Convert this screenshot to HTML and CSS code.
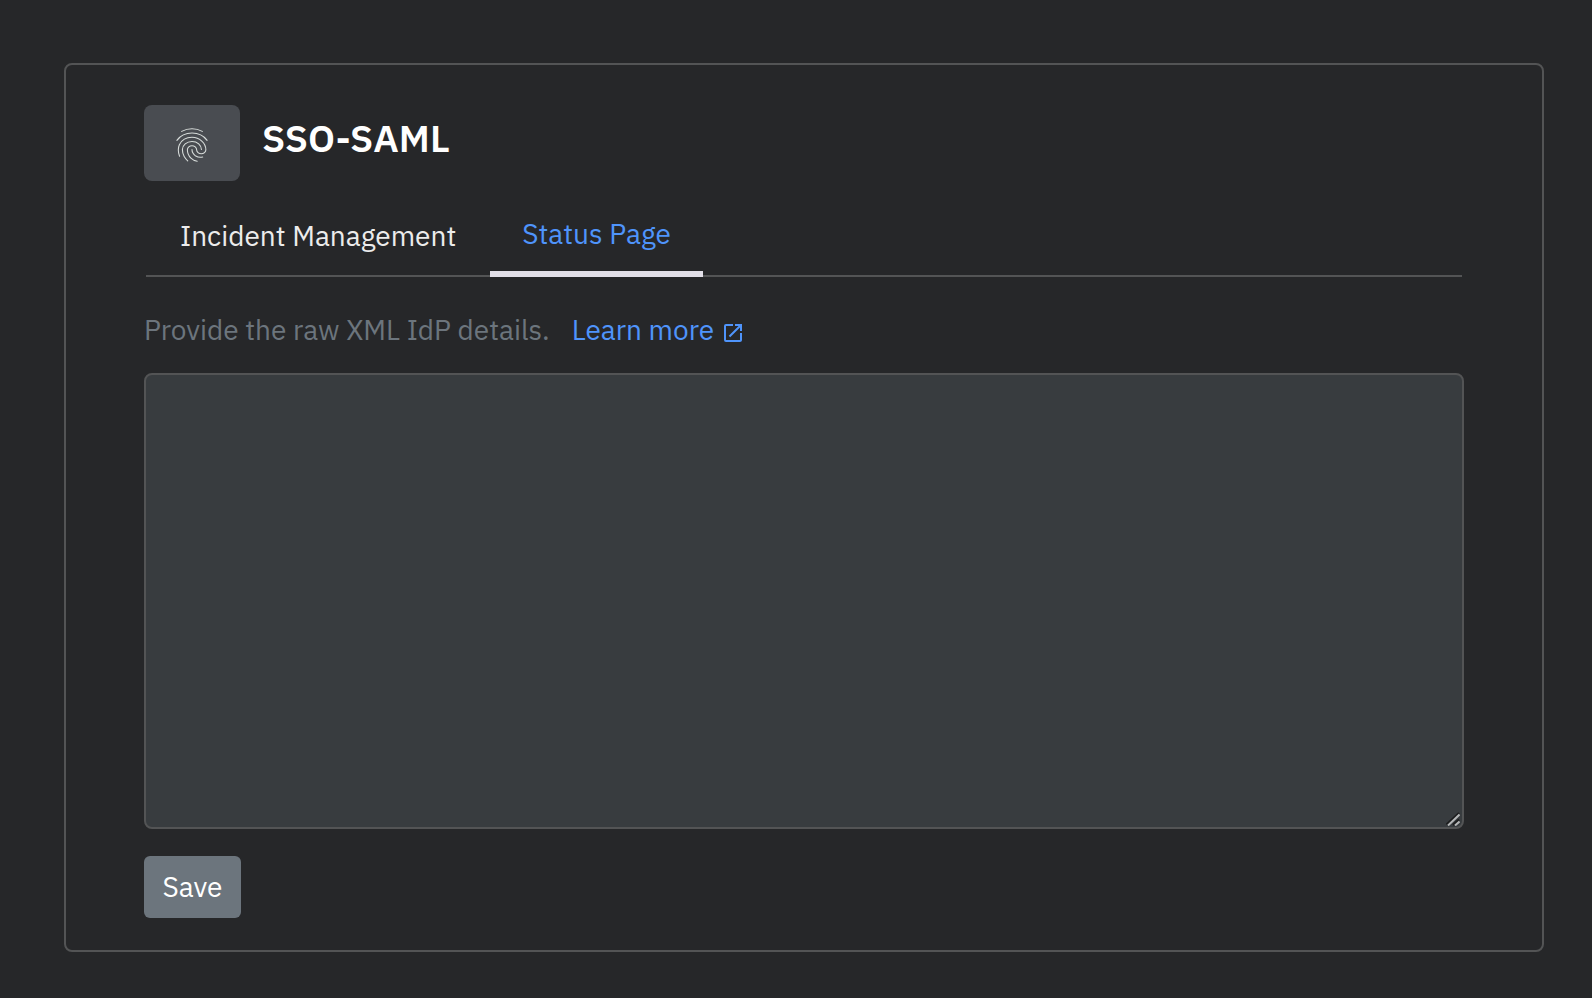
FILE: index.html
```html
<!DOCTYPE html>
<html lang="en">
<head>
<meta charset="utf-8">
<meta name="viewport" content="width=device-width, initial-scale=1">
<title>SSO-SAML</title>
<link rel="stylesheet" href="styles.css">
</head>
<body>
<main class="card">
  <header class="card-header">
    <span class="tile">
      <svg class="fingerprint" viewBox="3 2 18 20" preserveAspectRatio="none" aria-hidden="true">
        <path d="M6.2 4C8 3 9.8 2.5 12 2.5S16 3 17.8 4"/>
        <path d="M3.5 9.3C5.4 6.6 8.4 5 12 5s6.6 1.6 8.5 4.3"/>
        <path d="M5 18.6c-.6-1.6-.7-2.9-.7-3.7 0-1.1.2-2.1.6-3C6.1 9.3 8.9 7.5 12 7.5c4.3 0 7.8 3.3 7.8 7.3 0 1.3-1.2 2.4-2.6 2.4s-2.6-1.1-2.6-2.4-1.2-2.4-2.6-2.4-2.6 1.1-2.6 2.4c0 1.8.7 3.6 2 4.9 1 1 1.9 1.5 3.5 1.9"/>
        <path d="M9.6 21.4c-.9-.9-1.3-1.4-2-2.6-.7-1.2-1-2.5-1-4.1 0-2.6 2.4-4.8 5.4-4.8s5.3 2.1 5.3 4.8"/>
        <path d="M12 14.7c0 1.5.8 2.9 2.1 3.8 1.1.7 2.4.9 3.9.6"/>
      </svg>
    </span>
    <h1 class="title">SSO-SAML</h1>
  </header>
  <nav class="tabs">
    <a class="tab" href="#incident-management">Incident Management</a>
    <a class="tab tab-active" href="#status-page" aria-current="page">Status Page</a>
  </nav>
  <form class="form">
    <div class="hint">
      <label for="idp">Provide the raw XML IdP details.</label>
      <a class="learn" href="#learn-more">Learn more
        <svg class="external" viewBox="3 3 18 18" aria-hidden="true"><path d="M19 19H5V5h7V3H5a2 2 0 0 0-2 2v14a2 2 0 0 0 2 2h14c1.1 0 2-.9 2-2v-7h-2v7zM14 3v2h3.59l-9.83 9.83 1.41 1.41L19 6.41V10h2V3h-7z"/></svg>
      </a>
    </div>
    <div class="field">
      <textarea class="xml" id="idp"></textarea>
      <svg class="grip" viewBox="0 0 14 14" aria-hidden="true">
        <path class="grip-shade" d="M.5 12.5L13 1M7 13l6-5.5"/>
        <path class="grip-line" d="M2 13.5L13.5 2.5M9 13.5l4.5-4"/>
      </svg>
    </div>
    <button class="save" type="button">Save</button>
  </form>
</main>
</body>
</html>
```

FILE: styles.css
```css
* {
  box-sizing: border-box;
}

body {
  margin: 0;
  padding: 63px 48px 46px 64px;
  background: #262729;
  color: #ececec;
  font: 28px/36px "IBM Plex Sans", Roboto, sans-serif;
}

.card {
  padding: 40px 78px 32px;
  border: 2px solid #535455;
  border-radius: 8px;
}

.card-header {
  display: flex;
  gap: 22px;
}

.tile {
  display: flex;
  align-items: center;
  justify-content: center;
  width: 96px;
  height: 76px;
  padding-top: 4px;
  border-radius: 8px;
  background: #494c51;
}

.fingerprint {
  width: 32px;
  height: 34px;
  fill: none;
  stroke: #d8dddb;
  stroke-width: 0.6;
  stroke-linecap: round;
}

.title {
  margin: 0;
  color: #fff;
  font-size: 38px;
  font-weight: 600;
  line-height: 66px;
}

.tabs {
  display: flex;
  align-items: flex-end;
  margin: 24px 2px 0;
  height: 72px;
  box-shadow: inset 0 -2px #535455;
}

.tab {
  padding: 0 34px 23px;
  color: #ececec;
  text-decoration: none;
}

.tab-active {
  padding: 0 32px 19px;
  border-bottom: 6px solid #e2dfe8;
  color: #4f94fb;
}

.hint {
  display: flex;
  gap: 22px;
  margin: 35px 0 25px;
  color: #6c757d;
}

.learn {
  display: flex;
  align-items: center;
  gap: 10px;
  color: #4f94fb;
  text-decoration: none;
}

.external {
  width: 18px;
  height: 18px;
  margin-top: 6px;
  fill: currentColor;
}

.field {
  position: relative;
}

.xml {
  display: block;
  width: 100%;
  height: 456px;
  padding: 12px 24px;
  border: 2px solid #535455;
  border-radius: 8px;
  outline: 0;
  background: #383c3f;
  color: #ececec;
  font: inherit;
  resize: vertical;
}

.xml::-webkit-resizer {
  background: transparent;
}

.grip {
  position: absolute;
  right: 4px;
  bottom: 3px;
  width: 14px;
  height: 14px;
  fill: none;
  pointer-events: none;
}

.grip-shade {
  stroke: #1b1c1d;
  stroke-width: 2;
}

.grip-line {
  stroke: #b4b6b7;
  stroke-width: 2;
}

.save {
  display: block;
  min-width: 97px;
  height: 62px;
  margin-top: 27px;
  padding: 0 18px;
  border: 0;
  border-radius: 6px;
  background: #6c757d;
  color: #fff;
  font: inherit;
}
```
